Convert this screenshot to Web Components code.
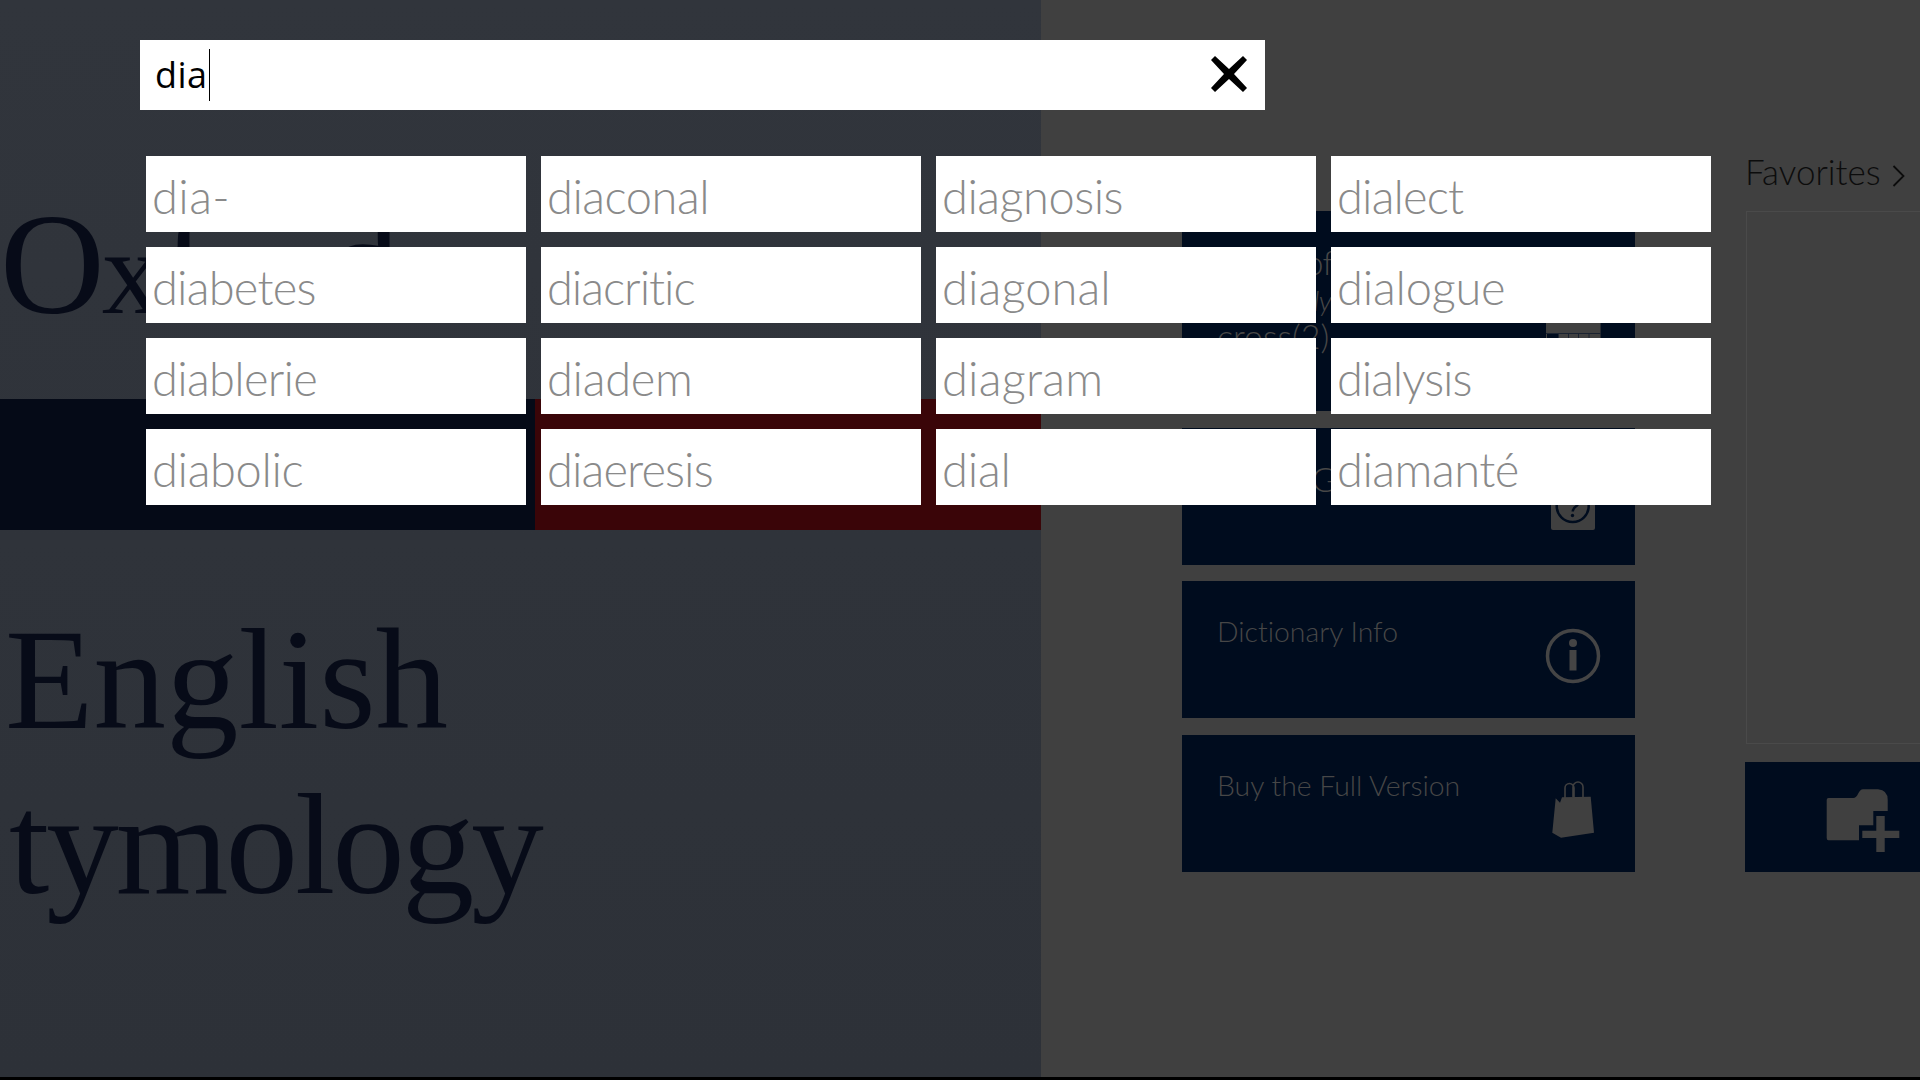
<!DOCTYPE html>
<html lang="en">
<head>
<meta charset="utf-8">
<title>Oxford Dictionary</title>
<style>
html, body { margin: 0; padding: 0; background: #000; }
body { width: 1920px; height: 1080px; overflow: hidden; font-family: "Lato", sans-serif; }
</style>
</head>
<body>
<dict-page>
    <title-panel slot="left"></title-panel>
    <home-panel slot="right">
        <home-tile slot="tiles" style="--h:200px;--pt:31px;--fs:34px;--lh:40px;--ls:-.7px">
            <span slot="label">Word of the Day</span>
            <em slot="sub">Daily</em>
            <span slot="word">cross(2)</span>
            <svg slot="icon" width="80" height="80" viewBox="0 0 80 80">
                <rect x="13" y="20" width="54.600" height="60" fill="#404040"/>
                <path d="M13 55.500H67.600" stroke="#1a2230" stroke-width="1"/>
                <rect x="14" y="56" width="11" height="24" fill="#000c1e"/>
                <path d="M25.500 56V80M35.500 56V80M45.500 56V80M56 56V80" stroke="#1a2230" stroke-width="1"/>
            </svg>
        </home-tile>
        <home-tile slot="tiles" style="--mt:1px;--pt:31px;--fs:34px;--lh:40px;--ls:-.7px">
            <span slot="label">Usage Guide</span>
            <svg slot="icon" width="80" height="80" viewBox="0 0 80 80">
                <rect x="18" y="16" width="44" height="51" rx="2" fill="#404040"/>
                <circle cx="39.700" cy="43" r="16" fill="#404040" stroke="#000c1e" stroke-width="2.500"/>
                <path d="M35 38a5.500 5.500 0 1 1 9 4.500q-4 2.500-4.300 6" fill="none" stroke="#000c1e" stroke-width="2.500"/>
                <circle cx="39.500" cy="52.500" r="1.700" fill="#000c1e"/>
            </svg>
        </home-tile>
        <home-tile slot="tiles">
            <span slot="label">Dictionary Info</span>
            <svg slot="icon" width="80" height="80" viewBox="0 0 80 80">
                <circle cx="40" cy="40" r="25.500" fill="none" stroke="#454545" stroke-width="3.500"/>
                <circle cx="40" cy="27" r="4" fill="#454545"/>
                <rect x="36.500" y="34" width="7" height="20.500" fill="#454545"/>
            </svg>
        </home-tile>
        <home-tile slot="tiles" style="--mt:1px">
            <span slot="label">Buy the Full Version</span>
            <svg slot="icon" width="80" height="80" viewBox="0 0 80 80">
                <path d="M32 28V18a4.500 4.500 0 0 1 9 0V28M40 27V17a5 5 0 0 1 10 0V27" fill="none" stroke="#404040" stroke-width="1.600"/>
                <path d="M22.700 28.300L27 32.700L29 27.300L57.700 26.700L61 62.700L28 67.700L19.300 62.700Z" fill="#404040"/>
            </svg>
        </home-tile>
        <fav-panel slot="side"></fav-panel>
    </home-panel>
    <search-flyout slot="over">
        <suggest-cell style="--ls:.4px">dia-</suggest-cell>
        <suggest-cell>diaconal</suggest-cell>
        <suggest-cell>diagnosis</suggest-cell>
        <suggest-cell style="--ls:-.85px">dialect</suggest-cell>
        <suggest-cell style="--ls:-.8px">diabetes</suggest-cell>
        <suggest-cell style="--ls:-1.05px">diacritic</suggest-cell>
        <suggest-cell style="--ls:.1px">diagonal</suggest-cell>
        <suggest-cell style="--ls:-.2px">dialogue</suggest-cell>
        <suggest-cell style="--ls:-.7px">diablerie</suggest-cell>
        <suggest-cell style="--ls:-.3px">diadem</suggest-cell>
        <suggest-cell style="--ls:.2px">diagram</suggest-cell>
        <suggest-cell style="--ls:-1.1px">dialysis</suggest-cell>
        <suggest-cell style="--ls:-.35px">diabolic</suggest-cell>
        <suggest-cell style="--ls:-.9px">diaeresis</suggest-cell>
        <suggest-cell style="--ls:-.2px">dial</suggest-cell>
        <suggest-cell>diamanté</suggest-cell>
    </search-flyout>
</dict-page>

<script>
class ShadowBase extends HTMLElement {
    constructor() {
        super();
        this.render();
    }

    render() {
        const template = document.createElement("template");
        template.innerHTML = `<style>${this.css()}</style>${this.html()}`;

        this.attachShadow({ mode: "open" });
        this.shadowRoot.appendChild(template.content.cloneNode(true));
    }
}

class DictPage extends ShadowBase {
    css() {
        return `:host {
            display: flex;
            position: relative;
            width: 1920px;
            height: 1077px;
            overflow: hidden;
        }
        .l { width: 1041px; flex: none; display: block; }
        .r { flex: 1; display: block; min-width: 0; }`;
    }

    html() {
        return `<div class="l"><slot name="left"></slot></div>
            <div class="r"><slot name="right"></slot></div>
            <slot name="over"></slot>`;
    }
}

class TitlePanel extends ShadowBase {
    css() {
        return `:host {
            display: block;
            height: 1077px;
            background: linear-gradient(#31353c, #2d3138);
            color: #070b18;
            font: 145px/165px "Liberation Serif", serif;
            overflow: hidden;
        }
        .ox { height: 399px; padding: 182px 0 0 0; box-sizing: border-box; letter-spacing: -3px; white-space: nowrap; }
        /* the reference face has a lower x-height than Liberation Serif */
        .ox span { font-size: 120px; letter-spacing: 10px; }
        .band { display: flex; height: 131px; }
        .band i { display: block; width: 535px; background: #050a17; }
        .band b { display: block; flex: 1; background: #3a0508; }
        .en { padding: 67px 0 0 5px; }
        .ty { padding-left: 9px; letter-spacing: -3px; }`;
    }

    html() {
        return `<div class="ox">O<span style="letter-spacing:0">x</span>f<span>or</span>d</div>
            <div class="band"><i></i><b></b></div>
            <div class="en">English</div>
            <div class="ty">tymology</div>`;
    }
}

class HomePanel extends ShadowBase {
    css() {
        return `:host {
            display: flex;
            height: 1077px;
            background: #404040;
            padding-left: 141px;
            gap: 110px;
            box-sizing: border-box;
            overflow: hidden;
        }
        .tiles {
            width: 453px;
            flex: none;
            padding-top: 211px;
            display: flex;
            flex-direction: column;
            gap: 16px;
        }
        .side { flex: none; width: 400px; }`;
    }

    html() {
        return `<div class="tiles"><slot name="tiles"></slot></div>
            <div class="side"><slot name="side"></slot></div>`;
    }
}

class HomeTile extends ShadowBase {
    css() {
        return `:host {
            display: flex;
            justify-content: space-between;
            align-items: center;
            height: var(--h, 137px);
            margin-top: var(--mt, 0);
            flex: none;
            background: #000c1e;
            color: #474747;
            padding: 0 22px 0 35px;
            box-sizing: border-box;
            overflow: hidden;
        }
        .t {
            align-self: flex-start;
            padding-top: var(--pt, 32px);
            font: 300 var(--fs, 28.4px)/var(--lh, 36px) "Lato", sans-serif;
            letter-spacing: var(--ls, 0);
            font-variant-ligatures: none;
            white-space: nowrap;
            width: 114px;
        }
        .s { font-size: 28px; line-height: 36px; text-align: right; }
        .w { font-size: 34px; line-height: 40px; margin-top: -2px; letter-spacing: 0; }
        .i { margin-top: 13px; height: 80px; flex: none; }`;
    }

    html() {
        return `<div class="t"><slot name="label"></slot><div class="s"><slot name="sub"></slot></div><div class="w"><slot name="word"></slot></div></div>
            <div class="i"><slot name="icon"></slot></div>`;
    }
}

class FavPanel extends ShadowBase {
    css() {
        return `:host {
            display: block;
            padding-top: 148px;
            color: #0c0c0c;
        }
        .h {
            display: flex;
            height: 63px;
            font: 300 35px/46px "Lato", sans-serif;
        }
        .h svg { margin: 17px 0 0 11px; }
        .box {
            height: 533px;
            margin-left: 1px;
            border: 1px solid #4a4a4a;
            box-sizing: border-box;
        }
        .add {
            height: 110px;
            margin-top: 18px;
            background: #000c1e;
            padding: 25px 0 0 80px;
            box-sizing: border-box;
        }`;
    }

    html() {
        return `<div class="h">Favorites<svg width="13" height="22" viewBox="0 0 13 22"><path d="M1.500 1L11.500 11L1.500 21" fill="none" stroke="#0c0c0c" stroke-width="1.800"/></svg></div>
            <div class="box"></div>
            <div class="add">
                <svg width="76" height="68" viewBox="0 0 76 68">
                    <path d="M3.500 11H28.300Q31 11 33 7Q35 2.300 38 2.300H53Q62.700 3 62.700 13V24H48.300V38.300H34V53.300H3.500Q1.700 53.300 1.700 51V13Q1.700 11 3.500 11Z" fill="#404040"/>
                    <path d="M37.300 43.700H51.300V29H59.700V43.700H74.300V51H59.700V65H51.300V51H37.300Z" fill="#404040"/>
                </svg>
            </div>`;
    }
}

class SearchFlyout extends ShadowBase {
    css() {
        return `:host {
            position: absolute;
            left: 140px;
            top: 40px;
            display: block;
            width: 1571px;
        }
        .box {
            display: flex;
            align-items: center;
            justify-content: space-between;
            width: 1125px;
            height: 70px;
            background: #fff;
            padding: 0 17px 0 15px;
            box-sizing: border-box;
        }
        .q { display: flex; align-items: center; font: 36px/52px "Open Sans", sans-serif; letter-spacing: .5px; color: #000; }
        .q i { display: block; width: 1px; height: 52px; margin-left: 1px; background: #000; }
        .box svg { margin-top: -2px; }
        .grid {
            display: grid;
            grid-template-columns: repeat(4, 380px);
            grid-auto-rows: 76px;
            grid-auto-flow: row;
            gap: 15px;
            margin: 46px 0 0 6px;
        }`;
    }

    html() {
        return `<div class="box">
                <div class="q">dia<i></i></div>
                <svg width="38" height="38" viewBox="0 0 38 38"><path d="M1 5L5 1L19 14L33 1L37 5L24 19L37 33L33 37L19 24L5 37L1 33L14 19Z" fill="#000"/></svg>
            </div>
            <div class="grid"><slot></slot></div>`;
    }
}

class SuggestCell extends ShadowBase {
    css() {
        return `:host {
            display: block;
            background: #fff;
            color: #8a8a8a;
            padding: 2px 0 0 6px;
            height: 76px;
            box-sizing: border-box;
            font: 300 47px/76px "Lato", sans-serif;
            letter-spacing: var(--ls, -.5px);
            font-variant-ligatures: none;
            overflow: hidden;
            white-space: nowrap;
        }`;
    }

    html() {
        return `<slot></slot>`;
    }
}

window.customElements.define("dict-page", DictPage);
window.customElements.define("title-panel", TitlePanel);
window.customElements.define("home-panel", HomePanel);
window.customElements.define("home-tile", HomeTile);
window.customElements.define("fav-panel", FavPanel);
window.customElements.define("search-flyout", SearchFlyout);
window.customElements.define("suggest-cell", SuggestCell);
</script>
</body>
</html>
